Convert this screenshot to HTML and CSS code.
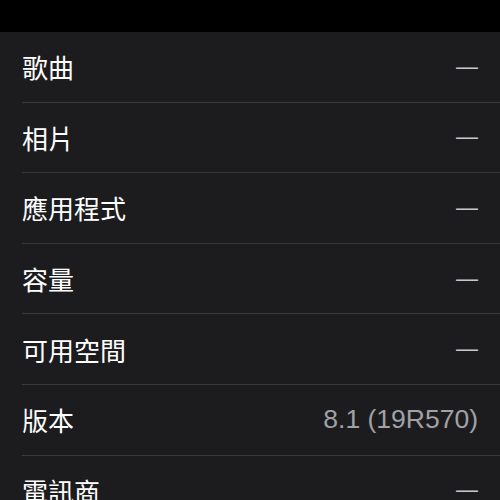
FILE: index.html
```html
<!DOCTYPE html>
<html lang="zh-Hant">
<head>
    <meta charset="UTF-8">
    <meta name="viewport" content="width=device-width, initial-scale=1.0">
    <title>關於本機</title>
    <link rel="stylesheet" href="styles.css">
</head>
<body>
<div class="status-bar"></div>
<ul class="info-list">
    <li class="info-row"><span class="label">歌曲</span><span class="value dash">—</span></li>
    <li class="info-row"><span class="label">相片</span><span class="value dash">—</span></li>
    <li class="info-row"><span class="label">應用程式</span><span class="value dash">—</span></li>
    <li class="info-row"><span class="label">容量</span><span class="value dash">—</span></li>
    <li class="info-row"><span class="label">可用空間</span><span class="value dash">—</span></li>
    <li class="info-row"><span class="label">版本</span><span class="value">8.1 (19R570)</span></li>
    <li class="info-row"><span class="label">電訊商</span><span class="value dash">—</span></li>
</ul>
</body>
</html>
```

FILE: styles.css
```css
body {
    margin: 0;
    padding: 0;
    background-color: #1c1c1e;
    font-family: "Liberation Sans", "Noto Sans CJK TC", sans-serif;
    overflow: hidden;
}

.status-bar {
    height: 32px;
    background-color: #000;
}

.info-list {
    list-style-type: none;
    margin: 0;
    padding: 0 0 0 22px;
}

.info-row {
    display: flex;
    align-items: center;
    justify-content: space-between;
    height: 70.6px;
    box-sizing: border-box;
    padding-right: 22px;
    border-bottom: 1px solid #38383a;
}

.label {
    color: #fff;
    font-size: 26px;
}

.value {
    color: #a1a1a6;
    font-size: 26.5px;
}

.dash {
    color: #c7c7cc;
    font-size: 22px;
}
```
